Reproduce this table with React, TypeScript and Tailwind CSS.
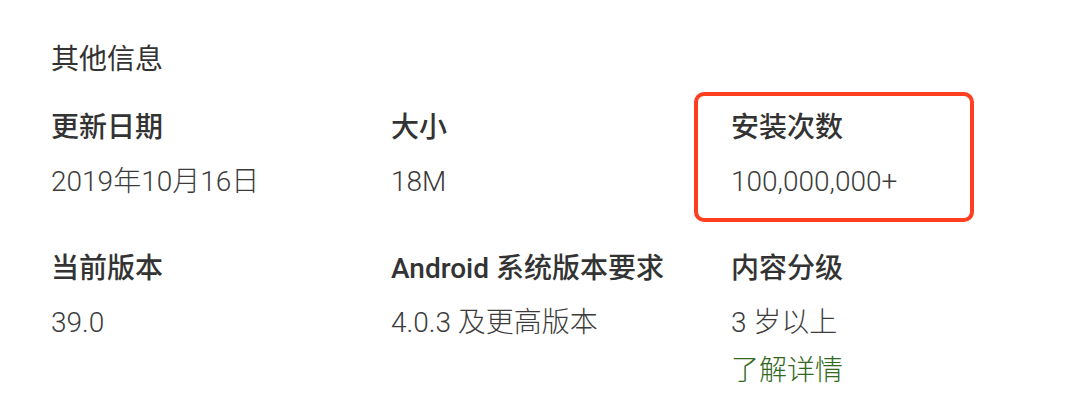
import React from "react";

const font = { fontFamily: "Roboto, 'Noto Sans CJK SC', sans-serif" };

function Item({ label, value, extra }: { label: string; value: string; extra?: string }) {
  return (
    <div className="flex flex-col">
      <div className="text-[28px] leading-[40px] font-medium text-[#333333]">{label}</div>
      <div className="mt-[14px] text-[28px] leading-[40px] font-light text-[#3c3c3c]">{value}</div>
      {extra && (
        <div className="mt-[8px] text-[28px] leading-[40px] font-light text-[#33691e]">{extra}</div>
      )}
    </div>
  );
}

export default function App() {
  return (
    <div className="relative w-[1068px] h-[410px] bg-white overflow-hidden" style={font}>
      <div className="pl-[51px] pt-[40px]">
        <div className="text-[28px] leading-[40px] text-[#333333]">其他信息</div>
        <div className="mt-[28px] grid grid-cols-[340px_340px_340px] gap-y-[47px]">
          <Item label="更新日期" value="2019年10月16日" />
          <Item label="大小" value="18M" />
          <Item label="安装次数" value="100,000,000+" />
          <Item label="当前版本" value="39.0" />
          <Item label="Android 系统版本要求" value="4.0.3 及更高版本" />
          <Item label="内容分级" value="3 岁以上" extra="了解详情" />
        </div>
      </div>
      <div className="absolute left-[694px] top-[92px] w-[280px] h-[130px] border-[4px] border-[#ff3f1f] rounded-[10px]" />
    </div>
  );
}
